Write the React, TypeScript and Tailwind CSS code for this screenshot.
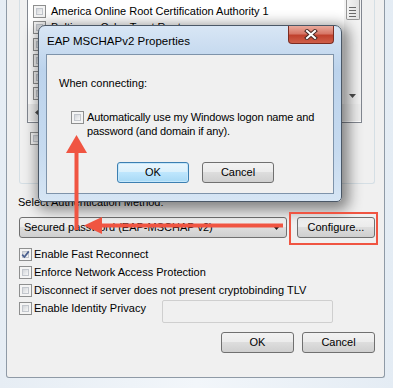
const winBtn =
  "h-[21px] flex items-center justify-center rounded-[3px] border border-[#707070] bg-[linear-gradient(#f2f2f2,#ebebeb_50%,#dddddd_50%,#cfcfcf)] text-[11px] text-black";
const combo =
  "h-[21px] flex items-center justify-between rounded-[3px] border border-[#707070] bg-[linear-gradient(#f2f2f2,#ebebeb_50%,#dddddd_50%,#cfcfcf)] text-[11px] text-black";
const defBtn =
  "h-[21px] flex items-center justify-center rounded-[3px] border border-[#3c7fb1] bg-[linear-gradient(#eaf6fd,#d9f0fc_50%,#bee6fd_50%,#a7d9f5)] shadow-[inset_0_0_0_1px_#c5e7fb] text-[11px] text-black";

const certs = ["America Online Root Certification Authority 1", "Baltimore CyberTrust Root", "", "", "", ""];

const options = [
  { label: "Enable Fast Reconnect", checked: true },
  { label: "Enforce Network Access Protection", checked: false },
  { label: "Disconnect if server does not present cryptobinding TLV", checked: false },
];

function Check({ checked = false }: { checked?: boolean }) {
  return (
    <div className="relative w-[13px] h-[13px] shrink-0 border border-[#8e8f8f] bg-[#f4f4f4] p-[2px]">
      <div className="w-full h-full border border-[#c2c6cc] bg-[linear-gradient(135deg,#d3d6da,#f7f7f7)]" />
      {checked && (
        <svg className="absolute left-0 top-0" width="11" height="11" viewBox="0 0 11 11">
          <path d="M2.2 5.6 L4.4 8 L8.8 2.4" fill="none" stroke="#4a5f8e" strokeWidth="1.7" />
        </svg>
      )}
    </div>
  );
}

export default function App() {
  return (
    <div className="relative w-[393px] h-[388px] overflow-hidden bg-[linear-gradient(90deg,#e6edf4,#f2f6fa_50%,#e4ecf4)] font-['Liberation_Sans',Arial,sans-serif] text-[11px] leading-[13px] text-black">
      {/* outer PEAP window */}
      <div className="ml-[6px] w-[379px] h-[378px] border-x border-b border-[#8f9aa6] rounded-b-[3px] bg-[#f0f0f0] flex flex-col">
        <div className="ml-[12px] w-[356px] h-[184px] border-x border-b border-[#d5dfe5] rounded-b-[3px] pl-[7px] flex flex-col">
          {/* certificate list */}
          <div className="w-[335px] h-[123px] border-x border-b border-[#828790] bg-white flex flex-col">
            <div className="flex h-[104px]">
              <div className="flex-1 pt-[3px] overflow-hidden">
                {certs.map((c, i) => (
                  <div key={i} className="h-[16.5px] flex items-center pl-[5px] gap-[5px] whitespace-nowrap">
                    <Check />
                    {c && <span>{c}</span>}
                  </div>
                ))}
              </div>
              <div className="w-[17px] bg-[#f3f3f3] flex flex-col items-center">
                <div className="w-[14px] h-[20px] border border-t-0 border-[#979797] rounded-b-[2px] bg-[linear-gradient(90deg,#f3f3f3,#e2e2e2)] flex flex-col items-center justify-center gap-[2px] pt-[4px]">
                  <div className="w-[7px] h-[1px] bg-[#6a6a6a]" />
                  <div className="w-[7px] h-[1px] bg-[#6a6a6a]" />
                  <div className="w-[7px] h-[1px] bg-[#6a6a6a]" />
                  <div className="w-[7px] h-[1px] bg-[#6a6a6a]" />
                </div>
                <svg className="mt-auto mb-[6px]" width="7" height="4" viewBox="0 0 7 4">
                  <path d="M0 0 H7 L3.5 4 Z" fill="#4d4d4d" />
                </svg>
              </div>
            </div>
            <div className="h-[17px] bg-[#eeeeee] flex items-center pl-[7px]">
              <svg width="4" height="7" viewBox="0 0 4 7">
                <path d="M4 0 V7 L0 3.5 Z" fill="#4d4d4d" />
              </svg>
            </div>
          </div>
          <div className="mt-[9px] ml-[3px] flex items-center">
            <Check />
          </div>
        </div>

        <div className="mt-[12px] pl-[11px] h-[13px]">Select Authentication Method:</div>

        <div className="mt-[8px] ml-[12px] flex gap-[10px]">
          <div className={`${combo} w-[268px] pl-[4px] pr-[6px]`}>
            <span>Secured password (EAP-MSCHAP v2)</span>
            <svg width="7" height="4" viewBox="0 0 7 4">
              <path d="M0 0 H7 L3.5 4 Z" fill="#1a1a1a" />
            </svg>
          </div>
          <div className={`${winBtn} w-[78px]`}>Configure...</div>
        </div>

        <div className="mt-[7px] ml-[12px] flex flex-col">
          {options.map((o) => (
            <div key={o.label} className="h-[18px] flex items-center gap-[2px] whitespace-nowrap">
              <Check checked={o.checked} />
              <span>{o.label}</span>
            </div>
          ))}
          <div className="flex items-start">
            <div className="w-[143px] h-[18px] flex items-center gap-[2px] whitespace-nowrap">
              <Check />
              <span>Enable Identity Privacy</span>
            </div>
            <div className="mt-[1px] w-[171px] h-[23px] border border-[#cfcfcf] rounded-[2px] bg-[#f0f0f0]" />
          </div>
        </div>

        <div className="mt-[9px] pr-[9px] flex justify-end gap-[8px]">
          <div className={`${winBtn} w-[73px]`}>OK</div>
          <div className={`${winBtn} w-[73px]`}>Cancel</div>
        </div>
      </div>

      {/* EAP MSCHAPv2 dialog over the window */}
      <div className="absolute left-[38px] top-[25px] w-[304px] h-[177px] rounded-t-[7px] rounded-b-[5px] border border-[#4b5867] bg-[linear-gradient(180deg,#d8e6f5,#bcd3ec_25%,#c6daef_70%,#d6e5f4)] shadow-[3px_4px_14px_4px_rgba(0,0,0,0.45)] px-[7px] pb-[7px] flex flex-col">
        <div className="h-[28px] flex items-center pl-[1px] pt-[2px] text-[11.5px]">EAP MSCHAPv2 Properties</div>
        <div className="absolute right-[7px] top-0 w-[46px] h-[18px] rounded-b-[4px] border border-t-0 border-[#7b2c22] bg-[linear-gradient(180deg,#e9aa9c,#d77768_45%,#c0412e_55%,#cf5f49)] flex items-center justify-center">
          <svg width="14" height="11" viewBox="0 0 14 11">
            <path d="M3 2 L11 9 M11 2 L3 9" stroke="#4a2a26" strokeWidth="4" strokeLinecap="square" />
            <path d="M3 2 L11 9 M11 2 L3 9" stroke="#ffffff" strokeWidth="2" strokeLinecap="square" />
          </svg>
        </div>
        <div className="flex-1 border border-[#7e93aa] bg-[#f0f0f0] pt-[22px] pl-[12px] flex flex-col">
          <div>When connecting:</div>
          <div className="mt-[20px] ml-[12px] flex items-start gap-[3px]">
            <div className="pt-[1px]">
              <Check />
            </div>
            <div className="leading-[14px] tracking-[-0.15px]">
              Automatically use my Windows logon name and
              <br />
              password (and domain if any).
            </div>
          </div>
          <div className="mt-[24px] ml-[58px] flex gap-[13px]">
            <div className={`${defBtn} w-[72px]`}>OK</div>
            <div className={`${winBtn} w-[72px]`}>Cancel</div>
          </div>
        </div>
      </div>

      {/* red annotations */}
      <div className="absolute left-[289px] top-[212px] w-[89px] h-[33px] border-2 border-[#f05542]" />
      <svg className="absolute left-0 top-0 pointer-events-none" width="393" height="388" viewBox="0 0 393 388">
        <path d="M76.5 230 V150" stroke="#f05542" strokeWidth="4" />
        <path d="M76.5 135 L66 153 L87 153 Z" fill="#f05542" />
        <path d="M283 225.5 H98" stroke="#f05542" strokeWidth="4" />
        <path d="M84 225.5 L102 217 L102 234 Z" fill="#f05542" />
      </svg>
    </div>
  );
}
